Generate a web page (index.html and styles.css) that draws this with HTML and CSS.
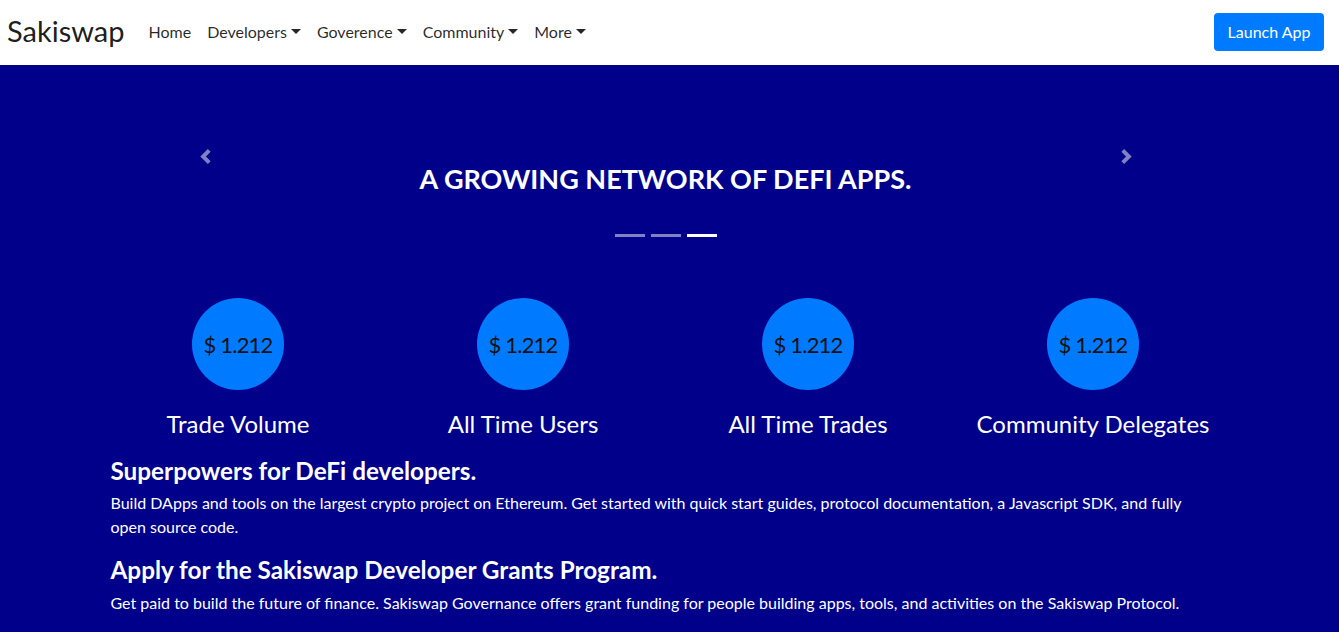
FILE: index.html
```html
<!DOCTYPE html>
<html lang="en">
<head>
<meta charset="utf-8">
<title>Sakiswap</title>
<link rel="stylesheet" href="styles.css">
</head>
<body>
<div class="page">
  <nav class="navbar">
    <a class="brand" href="#">Sakiswap</a>
    <ul class="nav">
      <li><a class="nav-link" href="#">Home</a></li>
      <li><a class="nav-link dropdown" href="#">Developers</a></li>
      <li><a class="nav-link dropdown" href="#">Goverence</a></li>
      <li><a class="nav-link dropdown" href="#">Community</a></li>
      <li><a class="nav-link dropdown" href="#">More</a></li>
    </ul>
    <a class="btn-launch" href="#">Launch App</a>
  </nav>

  <main class="hero">
    <section class="carousel">
      <a class="control prev" href="#" aria-label="Previous">
        <svg viewBox="0 0 8 8" width="15" height="15"><path fill="#fff" d="M5.25 0l-4 4 4 4 1.5-1.5L4.25 4l2.5-2.5L5.25 0z"/></svg>
      </a>
      <h3 class="slide-title">A GROWING NETWORK OF DEFI APPS.</h3>
      <ol class="indicators">
        <li></li>
        <li></li>
        <li class="active"></li>
      </ol>
      <a class="control next" href="#" aria-label="Next">
        <svg viewBox="0 0 8 8" width="15" height="15"><path fill="#fff" d="M2.75 0l-1.5 1.5L3.75 4l-2.5 2.5L2.75 8l4-4-4-4z"/></svg>
      </a>
    </section>

    <div class="container">
      <div class="stats">
        <div class="stat">
          <div class="circle">$ 1.212</div>
          <h4 class="stat-label">Trade Volume</h4>
        </div>
        <div class="stat">
          <div class="circle">$ 1.212</div>
          <h4 class="stat-label">All Time Users</h4>
        </div>
        <div class="stat">
          <div class="circle">$ 1.212</div>
          <h4 class="stat-label">All Time Trades</h4>
        </div>
        <div class="stat">
          <div class="circle">$ 1.212</div>
          <h4 class="stat-label">Community Delegates</h4>
        </div>
      </div>

      <div class="content">
        <h4 class="heading">Superpowers for DeFi developers.</h4>
        <p class="text">Build DApps and tools on the largest crypto project on Ethereum. Get started with quick start guides, protocol documentation, a Javascript SDK, and fully open source code.</p>
        <h4 class="heading">Apply for the Sakiswap Developer Grants Program.</h4>
        <p class="text">Get paid to build the future of finance. Sakiswap Governance offers grant funding for people building apps, tools, and activities on the Sakiswap Protocol.</p>
      </div>
    </div>
  </main>
</div>
</body>
</html>
```
FILE: styles.css
```css
* { box-sizing: border-box; }
html, body { margin: 0; padding: 0; }
body {
  font-family: Lato, "Liberation Sans", sans-serif;
  font-size: 16px;
  line-height: 1.5;
  color: #212529;
  background: #00008b;
}
a { text-decoration: none; }
h3, h4, p { margin: 0; }

.page { width: calc(100% - 8px); }

/* Navbar */
.navbar {
  height: 65px;
  display: flex;
  align-items: center;
  padding: 0 15px 0 7px;
  background: #fff;
  margin-right: -8px;
}
.brand {
  font-size: 29px;
  line-height: 1.2;
  color: rgba(0,0,0,.9);
  margin-right: 16px;
  margin-top: -2px;
}
.nav {
  list-style: none;
  margin: -2px 0 0;
  padding: 0;
  display: flex;
}
.nav-link {
  display: block;
  padding: 8px;
  color: rgba(0,0,0,.85);
  font-size: 16px;
}
.dropdown::after {
  content: "";
  display: inline-block;
  margin-left: 4px;
  vertical-align: 4px;
  border-top: 5px solid;
  border-left: 5px solid transparent;
  border-right: 5px solid transparent;
}
.btn-launch {
  margin-left: auto;
  margin-top: -1px;
  width: 110px;
  height: 38px;
  display: flex;
  align-items: center;
  justify-content: center;
  background: #007bff;
  color: #fff;
  border-radius: 4px;
  font-size: 16px;
}

/* Carousel */
.hero { color: #fff; padding-bottom: 24px; }
.carousel {
  position: relative;
  width: 1080px;
  margin: 0 auto;
  padding-top: 98px;
  text-align: center;
}
.slide-title {
  font-size: 27px;
  font-weight: 700;
  line-height: 1.2;
  color: #fff;
}
.indicators {
  list-style: none;
  margin: 39px 0 0;
  padding: 0;
  display: flex;
  justify-content: center;
  gap: 6px;
}
.indicators li {
  width: 30px;
  height: 3px;
  background: #fff;
  opacity: .5;
}
.indicators li.active { opacity: 1; }
.control {
  position: absolute;
  top: 84px;
  width: 15px;
  height: 15px;
  opacity: .5;
  display: block;
}
.control svg { display: block; }
.control.prev { left: 72px; }
.control.next { right: 72px; }

/* Stats */
.container {
  max-width: 1140px;
  margin: 0 auto;
  padding: 0 15px;
}
.stats {
  display: grid;
  grid-template-columns: repeat(4, 1fr);
  margin: 61px -15px 0;
}
.stat {
  display: flex;
  flex-direction: column;
  align-items: center;
}
.circle {
  width: 92px;
  height: 92px;
  border-radius: 50%;
  background: #007bff;
  color: #111;
  font-size: 22px;
  letter-spacing: -0.8px;
  line-height: 1.2;
  padding-top: 2px;
  display: flex;
  align-items: center;
  justify-content: center;
}
.stat-label {
  margin-top: 20px;
  font-size: 24px;
  font-weight: 400;
  line-height: 1.2;
  color: #fff;
}

/* Content */
.content { margin-top: 17px; }
.heading {
  font-size: 24.3px;
  font-weight: 700;
  line-height: 1.2;
  margin-bottom: 6px;
}
.text {
  font-size: 16px;
  line-height: 24px;
  margin-bottom: 16px;
}
```
